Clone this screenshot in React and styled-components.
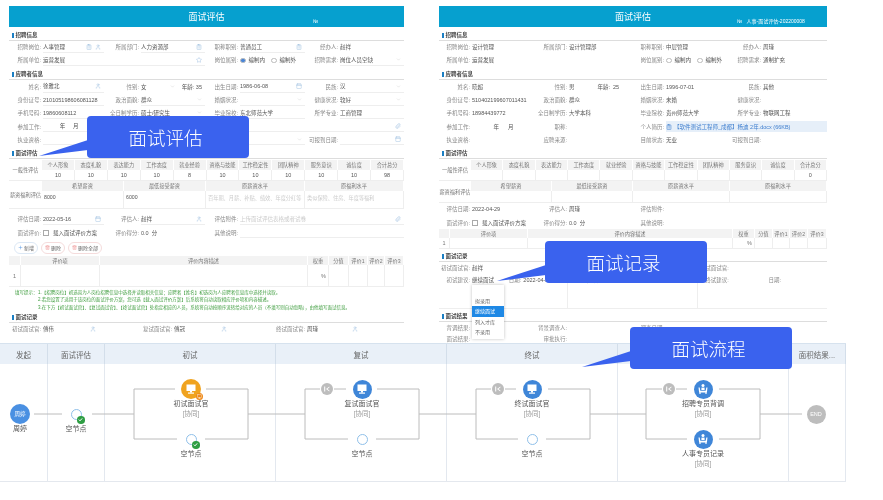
import styled, { createGlobalStyle } from 'styled-components';
import { Calendar, ChevronDown, ClipboardList, Monitor, Paperclip, Plus, Star, Trash2, User } from 'lucide-react';

const GlobalStyle = createGlobalStyle`
  html, body { margin: 0; padding: 0; background: #fff; }
  body { font-family: "Liberation Sans", "Noto Sans CJK SC", sans-serif; }
`;

const Page = styled.div`
  position: relative;
  width: 883px;
  height: 500px;
  overflow: hidden;
  background: #fff;
  filter: blur(0.5px);
`;

const Forms = styled.div`
  display: flex;
  align-items: flex-start;
  gap: 35px;
  height: 337px;
  padding: 6px 0 0 9px;
  overflow: hidden;
`;

const Form = styled.div`
  flex: 0 0 ${(p) => p.$width}px;
  font-size: 5.5px;
  color: #555;
`;

const Header = styled.div`
  position: relative;
  display: flex;
  align-items: center;
  justify-content: center;
  height: 21px;
  background: #06a0cf;
  color: #fff;
  font-size: 9px;
`;

const SerialNo = styled.span`
  position: absolute;
  left: ${(p) => p.$left}px;
  bottom: 3px;
  font-size: 5px;
`;

const SectionTitle = styled.div`
  display: flex;
  align-items: flex-end;
  height: ${(p) => p.$height || 13.5}px;
  padding: 0 0 1px 3px;
  box-sizing: border-box;
  border-bottom: 1px solid #ddd;
  color: #444;
  font-size: 5.5px;
  font-weight: bold;
  &::before {
    content: '';
    width: 1.5px;
    height: 5px;
    margin: 0 2px 1px 0;
    background: #1a7fc4;
  }
`;

const FieldRow = styled.div`
  display: grid;
  grid-template-columns: ${(p) => p.$tracks};
  height: ${(p) => p.$height || 13.2}px;
  align-items: center;
`;

const Label = styled.span`
  padding-right: 2px;
  text-align: right;
  color: #8a8a8a;
  white-space: nowrap;
`;

const Value = styled.span`
  display: flex;
  align-items: center;
  gap: 2px;
  grid-column: span ${(p) => p.$span || 1};
  height: 11.5px;
  padding-right: ${(p) => (p.$flush ? 0 : p.$inset || 3)}px;
  color: ${(p) => p.$color || '#555'};
  white-space: nowrap;
  border-bottom: ${(p) => (p.$line ? '1px solid #eee' : '0')};
  box-sizing: border-box;
  background: ${(p) => p.$fill || 'transparent'};
`;

const Tail = styled.span`
  display: flex;
  gap: 3px;
  margin-left: auto;
  color: #8fb6dc;
`;

const Radio = styled.i`
  display: inline-block;
  width: 3.5px;
  height: 3.5px;
  margin: 0 1px 0 ${(p) => (p.$gap ? 4 : 0)}px;
  border-radius: 50%;
  border: 1px solid #bbb;
  background: ${(p) => (p.$on ? '#4a86d8' : '#fff')};
`;

const Check = styled.i`
  display: inline-block;
  width: 4px;
  height: 4px;
  margin-right: 2px;
  border: 1px solid #aaa;
`;

const ScoreTable = styled.div`
  display: grid;
  grid-template-columns: ${(p) => p.$label}px repeat(11, 1fr);
  grid-template-rows: 10px 11px;
  margin-top: 1px;
  text-align: center;
`;

const SideLabel = styled.div`
  grid-row: span 2;
  display: flex;
  align-items: center;
  justify-content: center;
  color: #777;
  font-size: 5.2px;
  white-space: nowrap;
  border-bottom: 1px solid #eee;
`;

const HeadCell = styled.div`
  display: flex;
  align-items: center;
  justify-content: center;
  background: #f3f3f3;
  color: #777;
  border-right: 1px solid #fff;
  white-space: nowrap;
  font-size: 5.2px;
`;

const DataCell = styled.div`
  display: flex;
  align-items: center;
  justify-content: center;
  border-right: 1px solid #eee;
  border-bottom: 1px solid #eee;
  color: #555;
`;

const SalaryTable = styled.div`
  display: grid;
  grid-template-columns: ${(p) => p.$tracks};
  grid-template-rows: 10px ${(p) => p.$rowHeight}px;
`;

const NoteCell = styled.div`
  padding: 3px 2px 0;
  color: ${(p) => (p.$hint ? '#ccc' : '#555')};
  border-right: 1px solid #eee;
  border-bottom: 1px solid #eee;
  white-space: nowrap;
  overflow: hidden;
  font-size: 5.2px;
`;

const Gap = styled.div`
  height: ${(p) => p.$h}px;
`;

const ButtonBar = styled.div`
  display: flex;
  gap: 3px;
  align-items: center;
  height: 17px;
  padding-left: 5px;
`;

const PillButton = styled.span`
  display: flex;
  align-items: center;
  gap: 1px;
  height: 10px;
  padding: 0 3px;
  border-radius: 6px;
  border: 1px solid ${(p) => (p.$danger ? '#f5dcdc' : '#dce8f5')};
  color: #666;
  font-size: 5px;
  svg { color: ${(p) => (p.$danger ? '#e88' : '#4a90e2')}; }
`;

const ItemTable = styled.div`
  display: grid;
  grid-template-columns: ${(p) => p.$tracks};
  grid-template-rows: ${(p) => p.$head}px ${(p) => p.$row}px;
  border-bottom: 1px solid #eee;
`;

const ItemCell = styled.div`
  display: flex;
  align-items: center;
  justify-content: ${(p) => p.$align || 'center'};
  padding: 0 2px;
  border-right: 1px solid #eee;
  color: #777;
`;

const Tips = styled.div`
  display: grid;
  grid-template-columns: 23px 1fr;
  padding: 2px 0 0 6px;
  color: #3f9d3f;
  font-size: 4.5px;
  line-height: 7.2px;
  white-space: nowrap;
`;

const ReviewGrid = styled.div`
  display: grid;
  grid-template-columns: repeat(3, 1fr);
  height: 46px;
  border-bottom: 1px solid #eee;
`;

const ReviewCol = styled.div`
  position: relative;
  border-right: ${(p) => (p.$last ? '0' : '1px solid #eee')};
`;

const ReviewRow = styled.div`
  display: grid;
  grid-template-columns: 33px 1fr ${(p) => (p.$date ? '20px 44px' : '')};
  height: 12px;
  align-items: center;
`;

const Dropdown = styled.ul`
  position: absolute;
  left: 33px;
  top: 23px;
  z-index: 2;
  width: 32px;
  height: 54px;
  margin: 0;
  padding: 11px 0 0;
  box-sizing: border-box;
  list-style: none;
  background: #fff;
  box-shadow: 0 0 3px rgba(0, 0, 0, 0.25);
`;

const DropdownItem = styled.li`
  height: 10.5px;
  line-height: 10.5px;
  padding-left: 3px;
  font-size: 5px;
  color: ${(p) => (p.$active ? '#fff' : '#666')};
  background: ${(p) => (p.$active ? '#1e88e5' : 'transparent')};
`;

const Flow = styled.section`
  width: 846px;
  height: 139px;
  box-sizing: border-box;
  border-top: 1px solid #d6e2ee;
  border-bottom: 1px solid #e4e8ee;
  display: flex;
  flex-direction: column;
`;

const FlowHead = styled.div`
  display: grid;
  grid-template-columns: 48px 57px 171px 171px 171px 171px 57px;
  height: 20px;
  background: #e9f0f8;
`;

const FlowTitle = styled.div`
  display: flex;
  align-items: center;
  justify-content: center;
  border-right: 1px solid #d3deea;
  color: #666;
  font-size: 7.5px;
  white-space: nowrap;
`;

const FlowBody = styled.div`
  position: relative;
  flex: 1;
  display: grid;
  grid-template-columns: 48px 57px 171px 171px 171px 171px 57px;
`;

const Lane = styled.div`
  border-right: 1px solid #e3e8ef;
`;

const Wires = styled.svg`
  position: absolute;
  left: 0;
  top: 0;
  width: 846px;
  height: 118px;
  fill: none;
  stroke: #bcbcbc;
  stroke-width: 1;
`;

const Node = styled.div`
  position: absolute;
  left: ${(p) => p.$x}px;
  top: ${(p) => p.$y - 10}px;
  width: 70px;
  margin-left: -35px;
  display: flex;
  flex-direction: column;
  align-items: center;
  font-size: 7px;
  line-height: 10px;
  color: #555;
  white-space: nowrap;
`;

const Slot = styled.div`
  position: relative;
  display: flex;
  align-items: center;
  justify-content: center;
  width: 20px;
  height: 20px;
`;

const Disc = styled.div`
  display: flex;
  flex: none;
  align-items: center;
  justify-content: center;
  width: ${(p) => p.$size}px;
  height: ${(p) => p.$size}px;
  border-radius: 50%;
  background: ${(p) => p.$bg};
  color: #fff;
  font-size: 5.5px;
`;

const Ring = styled.div`
  width: 9px;
  height: 9px;
  border-radius: 50%;
  border: 1px solid #8fc0ea;
  background: #fff;
`;

const Badge = styled.div`
  position: absolute;
  right: ${(p) => p.$right}px;
  bottom: ${(p) => p.$bottom}px;
  display: flex;
  align-items: center;
  justify-content: center;
  width: 7.5px;
  height: 7.5px;
  border-radius: 50%;
  background: ${(p) => p.$bg};
`;

const Sub = styled.div`
  color: #999;
  font-size: 6.5px;
`;

const Callout = styled.div`
  position: absolute;
  left: ${(p) => p.$x}px;
  top: ${(p) => p.$y}px;
  z-index: 5;
  display: flex;
  align-items: center;
  justify-content: center;
  box-sizing: border-box;
  width: 162px;
  height: 42px;
  padding-right: 5px;
  border-radius: 4px;
  background: #3a62ee;
  color: #fff;
  font-size: 18.5px;
  font-family: "Noto Sans CJK SC", sans-serif;
  font-weight: 300;
`;

const CalloutTail = styled.svg`
  position: absolute;
  left: -48px;
  top: 22px;
  width: 49px;
  height: 20px;
  fill: #3a62ee;
`;

const LEFT_TRACKS = '34px 61px 37px 64px 35px 65px 35px 64px';
const RIGHT_TRACKS = '33px 63px 34px 63px 34px 64px 33px 64px';
const SCORE_HEADS = ['个人形象', '态度礼貌', '表达能力', '工作态度', '就业经验', '资格与技能', '工作稳定性', '团队精神', '服务意识', '诚信度', '合计总分'];
const LEFT_SCORES = ['10', '10', '10', '10', '8', '10', '10', '10', '10', '10', '98'];
const RIGHT_SCORES = ['', '', '', '', '', '', '', '', '', '', '0'];
const SALARY_HEADS = ['希望薪资', '最低接受薪资', '原薪资水平', '原福利水平'];
const ITEM_HEADS = ['', '评价项', '评价内容描述', '权重', '分值', '评价1', '评价2', '评价3'];

const Icon = ({ as: Glyph }) => <Glyph size={6} strokeWidth={1.6} />;

const Select = () => (
  <Tail>
    <ChevronDown size={5} strokeWidth={1.5} color="#bbb" />
  </Tail>
);

const ScoreBlock = ({ label, scores }) => (
  <ScoreTable $label={label}>
    <SideLabel>一般性评估</SideLabel>
    {SCORE_HEADS.map((h) => <HeadCell key={h}>{h}</HeadCell>)}
    {scores.map((s, i) => <DataCell key={i}>{s}</DataCell>)}
  </ScoreTable>
);

const ItemBlock = ({ tracks, head, row }) => (
  <ItemTable $tracks={tracks} $head={head} $row={row}>
    {ITEM_HEADS.map((h, i) => <HeadCell key={i}>{h}</HeadCell>)}
    <ItemCell>1</ItemCell>
    <ItemCell />
    <ItemCell />
    <ItemCell $align="flex-end">%</ItemCell>
    <ItemCell />
    <ItemCell />
    <ItemCell />
    <ItemCell />
  </ItemTable>
);

const LeftForm = () => (
  <Form $width={395}>
    <Header>面试评估<SerialNo $left={304}>№</SerialNo></Header>
    <SectionTitle>招聘信息</SectionTitle>
    <FieldRow $tracks={LEFT_TRACKS}>
      <Label>招聘岗位:</Label>
      <Value $line>人事管理<Tail><Icon as={ClipboardList} /><Icon as={User} /></Tail></Value>
      <Label>所属部门:</Label>
      <Value $line>人力资源部<Tail><Icon as={ClipboardList} /></Tail></Value>
      <Label>职称职别:</Label>
      <Value $line>普通员工<Tail><Icon as={ClipboardList} /></Tail></Value>
      <Label>经办人:</Label>
      <Value>赵祥</Value>
    </FieldRow>
    <FieldRow $tracks={LEFT_TRACKS}>
      <Label>所属单位:</Label>
      <Value $line $span={3}>运营发展<Tail><Icon as={Star} /></Tail></Value>
      <Label>岗位属别:</Label>
      <Value><Radio $on />编制内<Radio $gap />编制外</Value>
      <Label>招聘需求:</Label>
      <Value $line>岗位人员空缺<Select /></Value>
    </FieldRow>
    <SectionTitle>应聘者信息</SectionTitle>
    <FieldRow $tracks={LEFT_TRACKS}>
      <Label>姓名:</Label>
      <Value $line>徐雅北<Tail><Icon as={User} /></Tail></Value>
      <Label>性别:</Label>
      <Value>女<Select />&nbsp;&nbsp;&nbsp;年龄:&nbsp;35</Value>
      <Label>出生日期:</Label>
      <Value $line>1986-06-08<Tail><Icon as={Calendar} /></Tail></Value>
      <Label>民族:</Label>
      <Value $line>汉<Select /></Value>
    </FieldRow>
    <FieldRow $tracks={LEFT_TRACKS}>
      <Label>身份证号:</Label>
      <Value $line>210105198606081128</Value>
      <Label>政治面貌:</Label>
      <Value $line>群众<Select /></Value>
      <Label>婚姻状况:</Label>
      <Value $line><Select /></Value>
      <Label>健康状况:</Label>
      <Value $line>较好<Select /></Value>
    </FieldRow>
    <FieldRow $tracks={LEFT_TRACKS}>
      <Label>手机号码:</Label>
      <Value $line>19860608112</Value>
      <Label>全日制学历:</Label>
      <Value $line>硕士/研究生<Select /></Value>
      <Label>毕业院校:</Label>
      <Value $line>东北师范大学</Value>
      <Label>所学专业:</Label>
      <Value $line>工商管理</Value>
    </FieldRow>
    <FieldRow $tracks={LEFT_TRACKS}>
      <Label>参加工作:</Label>
      <Value $line>&nbsp;&nbsp;&nbsp;&nbsp;&nbsp;&nbsp;&nbsp;&nbsp;&nbsp;&nbsp;&nbsp;年&nbsp;&nbsp;&nbsp;&nbsp;&nbsp;月</Value>
      <Label>职称:</Label>
      <Value $line />
      <Label>个人简历:</Label>
      <Value $line $span={3}><Tail><Icon as={Paperclip} /></Tail></Value>
    </FieldRow>
    <FieldRow $tracks={LEFT_TRACKS}>
      <Label>执业资格:</Label>
      <Value $line />
      <Label>应聘来源:</Label>
      <Value $line />
      <Label>目前状态:</Label>
      <Value $line><Select /></Value>
      <Label>可报到日期:</Label>
      <Value $line><Tail><Icon as={Calendar} /></Tail></Value>
    </FieldRow>
    <SectionTitle $height={12.5}>面试评估</SectionTitle>
    <ScoreBlock label={33} scores={LEFT_SCORES} />
    <SalaryTable $tracks="33px 82px 82px 99px 99px" $rowHeight={18}>
      <SideLabel>薪资福利评估</SideLabel>
      {SALARY_HEADS.map((h) => <HeadCell key={h}>{h}</HeadCell>)}
      <NoteCell>8000</NoteCell>
      <NoteCell>6000</NoteCell>
      <NoteCell $hint>百年期、月薪、补贴、绩效、年度分红等</NoteCell>
      <NoteCell $hint>类似保险、住房、年度等福利</NoteCell>
    </SalaryTable>
    <Gap $h={4} />
    <FieldRow $tracks={LEFT_TRACKS}>
      <Label>评估日期:</Label>
      <Value $line>2022-05-16<Tail><Icon as={Calendar} /></Tail></Value>
      <Label>评估人:</Label>
      <Value $line>赵祥<Tail><Icon as={User} /></Tail></Value>
      <Label>评估附件:</Label>
      <Value $line $span={3} $color="#ccc">上传面试评估表格或者试卷<Tail><Icon as={Paperclip} /></Tail></Value>
    </FieldRow>
    <FieldRow $tracks={LEFT_TRACKS}>
      <Label>面试评价:</Label>
      <Value><Check />载入面试评价方案</Value>
      <Label>评价得分:</Label>
      <Value>0.0&nbsp;&nbsp;分</Value>
      <Label>其他说明:</Label>
      <Value $line $span={3} />
    </FieldRow>
    <ButtonBar>
      <PillButton><Plus size={5} />新增</PillButton>
      <PillButton $danger><Trash2 size={5} />删除</PillButton>
      <PillButton $danger><Trash2 size={5} />删除全部</PillButton>
    </ButtonBar>
    <ItemBlock tracks="12px 79px 208px 21px 20px 19px 17px 19px" head={9} row={21} />
    <Tips>
      <span>填写提示：</span>
      <span>1.【招聘岗位】初选岗为人岗位招聘信息中选择并读取相关信息；应聘者【姓名】初选岗为人应聘者信息库中选择并读取。</span>
      <span />
      <span>2.若您设置了适用于该岗位的面试评价方案，您可选【载入面试评价方案】后系统将自动读取相应评价项和内容描述。</span>
      <span />
      <span>3.在下方【初试面试官】、【复试面试官】、【终试面试官】处指定相应的人员，系统将自动按顺序流转给对应的人员（不填写则自动忽略），由他填写面试信息。</span>
    </Tips>
    <SectionTitle $height={12}>面试记录</SectionTitle>
    <FieldRow $tracks="34px 97px 34px 99px 34px 97px">
      <Label>初试面试官:</Label>
      <Value $inset={44}>傅伟<Tail><Icon as={User} /></Tail></Value>
      <Label>复试面试官:</Label>
      <Value $inset={46}>傅冠<Tail><Icon as={User} /></Tail></Value>
      <Label>终试面试官:</Label>
      <Value $inset={46}>周瑾<Tail><Icon as={User} /></Tail></Value>
    </FieldRow>
  </Form>
);

const RightForm = () => (
  <Form $width={388}>
    <Header>面试评估<SerialNo $left={298}>№&nbsp;&nbsp;&nbsp;人事-面试评估-202200008</SerialNo></Header>
    <SectionTitle>招聘信息</SectionTitle>
    <FieldRow $tracks={RIGHT_TRACKS}>
      <Label>招聘岗位:</Label><Value>设计管理</Value>
      <Label>所属部门:</Label><Value>设计管理部</Value>
      <Label>职称职别:</Label><Value>中层管理</Value>
      <Label>经办人:</Label><Value>周瑾</Value>
    </FieldRow>
    <FieldRow $tracks={RIGHT_TRACKS}>
      <Label>所属单位:</Label><Value $span={3}>运营发展</Value>
      <Label>岗位属别:</Label><Value><Radio />编制内<Radio $gap />编制外</Value>
      <Label>招聘需求:</Label><Value>通制扩充</Value>
    </FieldRow>
    <SectionTitle>应聘者信息</SectionTitle>
    <FieldRow $tracks={RIGHT_TRACKS}>
      <Label>姓名:</Label><Value>晓超</Value>
      <Label>性别:</Label><Value>男&nbsp;&nbsp;&nbsp;&nbsp;&nbsp;&nbsp;&nbsp;&nbsp;&nbsp;&nbsp;&nbsp;&nbsp;&nbsp;&nbsp;&nbsp;年龄:&nbsp;&nbsp;25</Value>
      <Label>出生日期:</Label><Value>1996-07-01</Value>
      <Label>民族:</Label><Value>其他</Value>
    </FieldRow>
    <FieldRow $tracks={RIGHT_TRACKS}>
      <Label>身份证号:</Label><Value>510402199607011431</Value>
      <Label>政治面貌:</Label><Value>群众</Value>
      <Label>婚姻状况:</Label><Value>未婚</Value>
      <Label>健康状况:</Label><Value />
    </FieldRow>
    <FieldRow $tracks={RIGHT_TRACKS}>
      <Label>手机号码:</Label><Value>18984439772</Value>
      <Label>全日制学历:</Label><Value>大学本科</Value>
      <Label>毕业院校:</Label><Value>贵州师范大学</Value>
      <Label>所学专业:</Label><Value>物联网工程</Value>
    </FieldRow>
    <FieldRow $tracks={RIGHT_TRACKS}>
      <Label>参加工作:</Label><Value>&nbsp;&nbsp;&nbsp;&nbsp;&nbsp;&nbsp;&nbsp;&nbsp;&nbsp;&nbsp;&nbsp;&nbsp;&nbsp;&nbsp;年&nbsp;&nbsp;&nbsp;&nbsp;&nbsp;&nbsp;月</Value>
      <Label>职称:</Label><Value />
      <Label>个人简历:</Label>
      <Value $span={3} $flush $fill="#e6eff9" $color="#3f7fcf">
        <ClipboardList size={6} strokeWidth={2} />【软件测试工程师_成都】杨迪 2年.docx (66KB)
      </Value>
    </FieldRow>
    <FieldRow $tracks={RIGHT_TRACKS}>
      <Label>执业资格:</Label><Value />
      <Label>应聘来源:</Label><Value />
      <Label>目前状态:</Label><Value>无业</Value>
      <Label>可报到日期:</Label><Value />
    </FieldRow>
    <SectionTitle $height={12.5}>面试评估</SectionTitle>
    <ScoreBlock label={32} scores={RIGHT_SCORES} />
    <SalaryTable $tracks="32px 81px 81px 97px 97px" $rowHeight={12}>
      <SideLabel>薪资福利评估</SideLabel>
      {SALARY_HEADS.map((h) => <HeadCell key={h}>{h}</HeadCell>)}
      <NoteCell /><NoteCell /><NoteCell /><NoteCell />
    </SalaryTable>
    <FieldRow $tracks={RIGHT_TRACKS}>
      <Label>评估日期:</Label><Value>2022-04-29</Value>
      <Label>评估人:</Label><Value>周瑾</Value>
      <Label>评估附件:</Label><Value $span={3} />
    </FieldRow>
    <FieldRow $tracks={RIGHT_TRACKS}>
      <Label>面试评价:</Label><Value><Check />载入面试评价方案</Value>
      <Label>评价得分:</Label><Value>0.0&nbsp;&nbsp;分</Value>
      <Label>其他说明:</Label><Value $span={3} />
    </FieldRow>
    <ItemBlock tracks="11px 78px 205px 22px 18px 17px 18px 19px" head={9} row={10} />
    <SectionTitle $height={12.5}>面试记录</SectionTitle>
    <ReviewGrid>
      <ReviewCol>
        <ReviewRow><Label>初试面试官:</Label><Value>赵祥</Value></ReviewRow>
        <ReviewRow $date><Label>初试建议:</Label><Value>继续面试</Value><Label>日期:</Label><Value>2022-04-29</Value></ReviewRow>
        <Dropdown>
          <DropdownItem>拟录用</DropdownItem>
          <DropdownItem $active>继续面试</DropdownItem>
          <DropdownItem>列入才库</DropdownItem>
          <DropdownItem>不录用</DropdownItem>
        </Dropdown>
      </ReviewCol>
      <ReviewCol>
        <ReviewRow><Label>复试面试官:</Label><Value /></ReviewRow>
        <ReviewRow $date><Label>复试建议:</Label><Value /><Label>日期:</Label><Value /></ReviewRow>
      </ReviewCol>
      <ReviewCol $last>
        <ReviewRow><Label>终试面试官:</Label><Value /></ReviewRow>
        <ReviewRow $date><Label>终试建议:</Label><Value /><Label>日期:</Label><Value /></ReviewRow>
      </ReviewCol>
    </ReviewGrid>
    <SectionTitle $height={13}>面试结果</SectionTitle>
    <FieldRow $tracks={RIGHT_TRACKS} $height={12}>
      <Label>背调结果:</Label><Value />
      <Label>背景调查人:</Label><Value />
      <Label>调查日期:</Label><Value />
    </FieldRow>
    <FieldRow $tracks={RIGHT_TRACKS} $height={11}>
      <Label>面试结果:</Label><Value />
      <Label>审批执行:</Label><Value />
    </FieldRow>
  </Form>
);

const PeopleGlyph = () => (
  <svg width="12" height="12" viewBox="0 0 12 12" fill="#fff">
    <circle cx="6" cy="2.4" r="1.5" />
    <path d="M1.5 4.5h1.2l.6 3.2h5.4l.6-3.2h1.2l-.6 5H9.6v1.5H8.4V9.5H3.6V11H2.4V9.5h-.3z" />
    <path d="M4.4 4.6h3.2v2.4H4.4z" />
  </svg>
);

const MonitorGlyph = () => (
  <svg width="12" height="12" viewBox="0 0 12 12">
    <rect x="1.5" y="1.5" width="9" height="6.5" fill="#fff" />
    <rect x="3" y="3" width="6" height="3.5" fill="currentColor" opacity="0.55" />
    <rect x="5" y="8" width="2" height="1.5" fill="#fff" />
    <rect x="3" y="9.5" width="6" height="1.2" fill="#fff" />
  </svg>
);

const SkipGlyph = () => (
  <svg width="8" height="8" viewBox="0 0 8 8" fill="#fff">
    <rect x="1.2" y="1.5" width="1" height="5" />
    <path d="M3 4l3.4-2.4v1L4.4 4l2 1.4v1z" />
  </svg>
);

const CheckBadge = () => (
  <Badge $bg="#2f9e44" $right={1.5} $bottom={0.5}>
    <svg width="5" height="5" viewBox="0 0 5 5" fill="none" stroke="#fff" strokeWidth="1">
      <path d="M0.8 2.6l1.2 1.2 2.2-2.4" />
    </svg>
  </Badge>
);

const OrangeBadge = () => (
  <Badge $bg="#ee8a1a" $right={-2} $bottom={-1}>
    <Monitor size={5} color="#fff" />
  </Badge>
);

const LANES = ['发起', '面试评估', '初试', '复试', '终试', '背调', '面积结果...'];

// 连线：主干 y=50，每个分支框 y=25 到 y=75，节点处留空
const WIRE_PATH = [
  'M34 50H62M92 50H134',
  'M175 25H134V75H177M205 75H248V25H206',
  'M248 50H305',
  'M320 25H305V75H348M376 75H419V25H377M334 25H346',
  'M419 50H476',
  'M491 25H476V75H518M546 75H590V25H548M505 25H516',
  'M590 50H646',
  'M662 25H646V75H687M719 75H760V25H719M676 25H687',
  'M760 50H802',
].join('');

const FlowChart = () => (
  <Flow>
    <FlowHead>
      {LANES.map((t) => <FlowTitle key={t}>{t}</FlowTitle>)}
    </FlowHead>
    <FlowBody>
      {LANES.map((t) => <Lane key={t} />)}
      <Wires viewBox="0 0 846 118">
        <path d={WIRE_PATH} />
      </Wires>

      <Node $x={20} $y={50}>
        <Slot><Disc $size={20} $bg="#4a90e2">周婷</Disc></Slot>
        周婷
      </Node>
      <Node $x={76} $y={50}>
        <Slot><Ring /><CheckBadge /></Slot>
        空节点
      </Node>

      <Node $x={191} $y={25}>
        <Slot><Disc $size={20} $bg="#f0a31f"><MonitorGlyph /></Disc><OrangeBadge /></Slot>
        初试面试官
        <Sub>[协同]</Sub>
      </Node>
      <Node $x={191} $y={75}>
        <Slot><Ring /><CheckBadge /></Slot>
        空节点
      </Node>

      <Node $x={327} $y={25}><Slot><Disc $size={12} $bg="#bdbdbd"><SkipGlyph /></Disc></Slot></Node>
      <Node $x={362} $y={25}>
        <Slot><Disc $size={19} $bg="#3f86d8"><MonitorGlyph /></Disc></Slot>
        复试面试官
        <Sub>[协同]</Sub>
      </Node>
      <Node $x={362} $y={75}>
        <Slot><Ring /></Slot>
        空节点
      </Node>

      <Node $x={498} $y={25}><Slot><Disc $size={12} $bg="#bdbdbd"><SkipGlyph /></Disc></Slot></Node>
      <Node $x={532} $y={25}>
        <Slot><Disc $size={19} $bg="#3f86d8"><MonitorGlyph /></Disc></Slot>
        终试面试官
        <Sub>[协同]</Sub>
      </Node>
      <Node $x={532} $y={75}>
        <Slot><Ring /></Slot>
        空节点
      </Node>

      <Node $x={669} $y={25}><Slot><Disc $size={12} $bg="#bdbdbd"><SkipGlyph /></Disc></Slot></Node>
      <Node $x={703} $y={25}>
        <Slot><Disc $size={19} $bg="#3f86d8"><PeopleGlyph /></Disc></Slot>
        招聘专员背调
        <Sub>[协同]</Sub>
      </Node>
      <Node $x={703} $y={75}>
        <Slot><Disc $size={19} $bg="#3f86d8"><PeopleGlyph /></Disc></Slot>
        人事专员记录
        <Sub>[协同]</Sub>
      </Node>

      <Node $x={816} $y={50}>
        <Slot><Disc $size={19} $bg="#bdbdbd">END</Disc></Slot>
      </Node>
    </FlowBody>
  </Flow>
);

const CalloutBox = ({ x, y, children }) => (
  <Callout $x={x} $y={y}>
    {children}
    <CalloutTail viewBox="0 0 49 20"><path d="M49 2L0 18l49-6z" /></CalloutTail>
  </Callout>
);

export default function App() {
  return (
    <Page>
      <GlobalStyle />
      <Forms>
        <LeftForm />
        <RightForm />
      </Forms>
      <FlowChart />
      <CalloutBox x={87} y={116}>面试评估</CalloutBox>
      <CalloutBox x={545} y={241}>面试记录</CalloutBox>
      <CalloutBox x={630} y={327}>面试流程</CalloutBox>
    </Page>
  );
}
